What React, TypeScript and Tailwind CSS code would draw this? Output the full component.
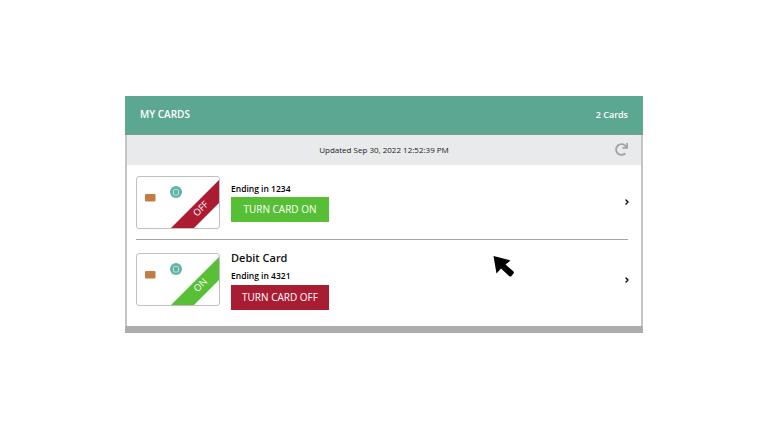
import { ChevronRight } from "lucide-react";
import { FaRedo } from "react-icons/fa";

interface CardArtProps {
	on: boolean;
}

function CardArt({ on }: CardArtProps) {
	const color = on ? "#58bf37" : "#ab1c33";
	return (
		<div className="h-[53px] w-[84px] shrink-0 overflow-hidden rounded-[3px] border border-[#c0c0c0] bg-white">
			<svg width="82" height="51" viewBox="0 0 82 51">
				<rect x="8" y="17" width="10.5" height="7.5" rx="1" fill="#c27d42" />
				<circle cx="39" cy="15" r="6" fill="#62b5a6" />
				<rect x="36.5" y="12.5" width="5" height="5.5" rx="1" fill="none" stroke="#d7eee9" strokeWidth="0.8" />
				<polygon points="34,51 82,3 82,26 57,51" fill={color} />
				<text
					x="66"
					y="34"
					fill="#fff"
					fontSize="9.5"
					fontFamily="'Open Sans', sans-serif"
					textAnchor="middle"
					transform={`rotate(-45 ${on ? 65 : 66} 34)`}
				>
					{on ? "ON" : "OFF"}
				</text>
			</svg>
		</div>
	);
}

function CardRow({ title, ending, on }: { title?: string; ending: string; on: boolean }) {
	return (
		<div className="flex items-center justify-between">
			<div className="flex items-center gap-[11px]">
				<CardArt on={on} />
				<div className="flex flex-col">
					{title && <div className="mb-[2px] text-[11px] leading-[18px] font-semibold text-[#111]">{title}</div>}
					<div className="text-[8.5px] leading-[14px] font-semibold text-black">{ending}</div>
					<button
						className={`h-[25px] w-[98px] text-[10px] text-white ${title ? "mt-[2px]" : "mt-[1px]"} ${
							on ? "bg-[#a91d33]" : "bg-[#57bf36]"
						}`}
					>
						{on ? "TURN CARD OFF" : "TURN CARD ON"}
					</button>
				</div>
			</div>
			<ChevronRight className="-mr-[3px] h-[8px] w-[8px] text-black" strokeWidth={4} />
		</div>
	);
}

export default function App() {
	return (
		<div className="h-[432px] w-[768px] overflow-hidden bg-white pt-[96px] pl-[125px] font-['Open_Sans',sans-serif]">
			<div className="relative w-[518px]">
				{/* Header */}
				<div className="flex h-[39px] items-center justify-between border-b-2 border-[#6f9f92] bg-[#5ba791] px-[15px] text-white">
					<span className="text-[10px] font-semibold">MY CARDS</span>
					<span className="text-[9px] font-semibold">2 Cards</span>
				</div>

				<div className="border-x-2 border-[#c4c4c4] bg-white">
					{/* Updated bar */}
					<div className="relative flex h-[30px] items-center justify-center bg-[#e9eaeb] text-[8px] font-medium text-[#222]">
						Updated Sep 30, 2022 12:52:39 PM
						<FaRedo className="absolute top-[8px] right-[13px] h-[13px] w-[13px] text-[#a3a3a3]" />
					</div>

					<div className="pr-[13px] pl-[9px]">
						<div className="flex h-[74px] flex-col justify-center">
							<CardRow ending="Ending in 1234" on={false} />
						</div>
						<div className="h-[1px] bg-[#a5a5a5]" />
						<div className="flex h-[86px] flex-col pt-[9px]">
							<CardRow title="Debit Card" ending="Ending in 4321" on />
						</div>
					</div>
				</div>
				<div className="h-[7px] bg-[#adadad]" />

				{/* Cursor */}
				<svg className="absolute top-[159px] left-[367px]" width="24" height="24" viewBox="0 0 24 24">
					<path d="M1.5 1 L4.5 18.5 L9 13.5 L17 21 Q18.5 22 19.5 21 L21.5 18.5 Q22.5 17 21 16 L13.5 9.5 L18.5 5.5 Z" fill="#000" />
				</svg>
			</div>
		</div>
	);
}
